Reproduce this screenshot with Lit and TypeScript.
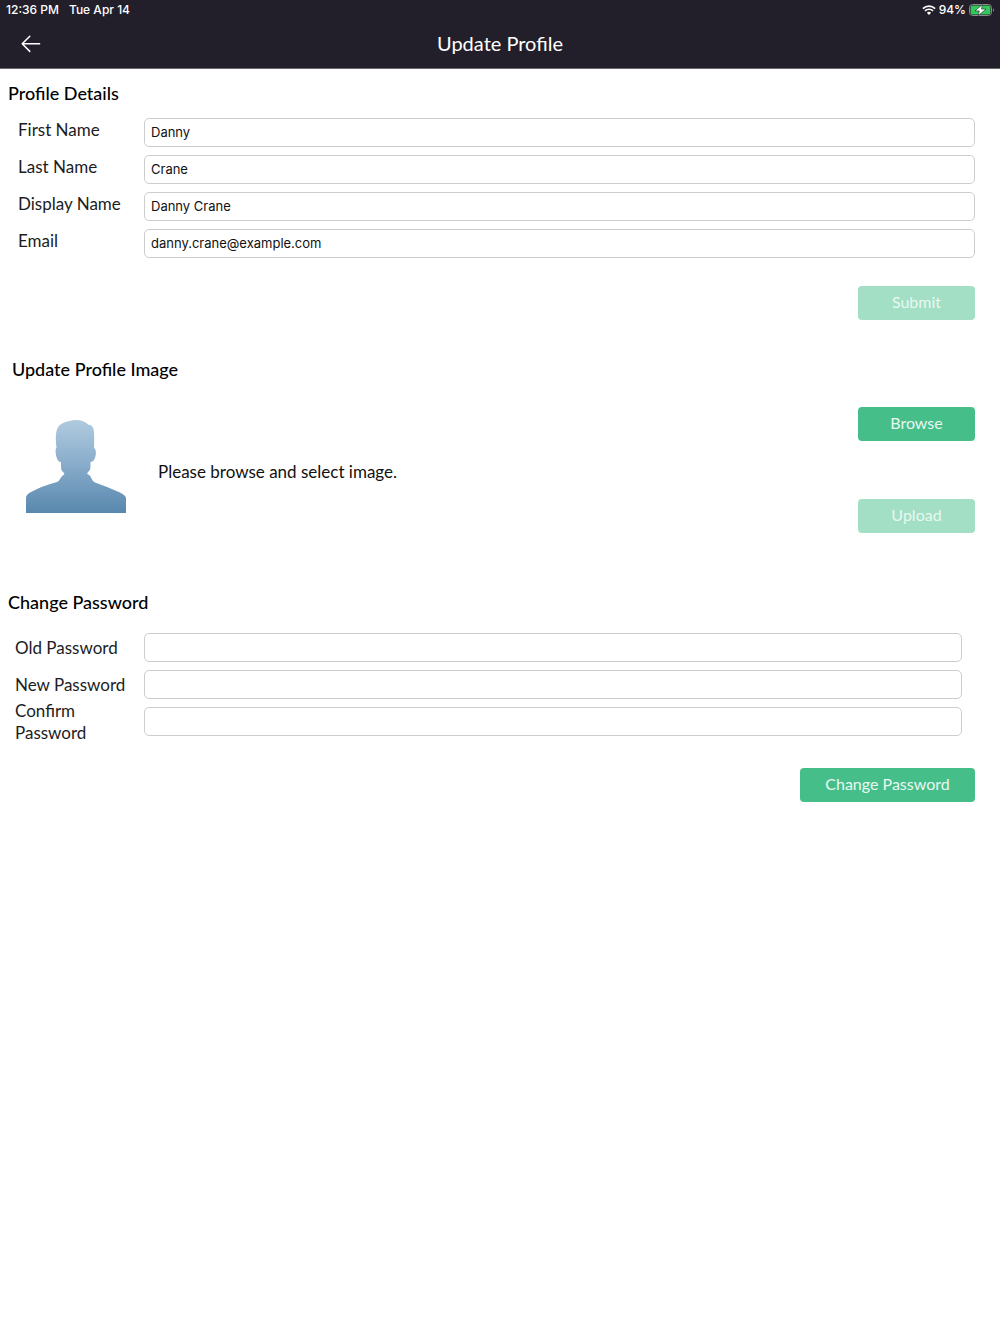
import { LitElement, html, css, svg } from "lit";
import { customElement, property } from "lit/decorators.js";

interface Field {
  id: string;
  label: string;
  type: string;
  value: string;
}

const profileFields: Field[] = [
  { id: "first-name", label: "First Name", type: "text", value: "Danny" },
  { id: "last-name", label: "Last Name", type: "text", value: "Crane" },
  { id: "display-name", label: "Display Name", type: "text", value: "Danny Crane" },
  { id: "email", label: "Email", type: "email", value: "danny.crane@example.com" },
];

const passwordFields: Field[] = [
  { id: "old-password", label: "Old Password", type: "password", value: "" },
  { id: "new-password", label: "New Password", type: "password", value: "" },
  { id: "confirm-password", label: "Confirm Password", type: "password", value: "" },
];

const wifiIcon = svg`
  <svg class="wifi" viewBox="0 0 14 10" aria-hidden="true">
    <path d="M0.9 3.6a8.7 8.7 0 0 1 12.2 0" fill="none" stroke="#fff" stroke-width="1.8"/>
    <path d="M3 5.9a5.7 5.7 0 0 1 8 0" fill="none" stroke="#fff" stroke-width="1.7"/>
    <path d="M7 9.9L4.9 7.8a3 3 0 0 1 4.2 0z" fill="#fff"/>
  </svg>`;

const batteryIcon = svg`
  <svg class="battery" viewBox="0 0 25 12" aria-hidden="true">
    <rect x="0.5" y="0.5" width="22" height="11" rx="3.2" fill="none" stroke="#8b8990"/>
    <path d="M24 4.2q1 .6 1 1.8t-1 1.8z" fill="#8b8990"/>
    <rect x="1.600" y="1.600" width="19.800" height="8.800" rx="2" fill="#35c759"/>
    <path d="M13.400 0.600L6 6.900H10.300L9.300 11.600L17 5.100H12.500z" fill="#fff" stroke="#221f2a" stroke-width="0.6"/>
  </svg>`;

const backIcon = svg`
  <svg class="arrow" viewBox="0 0 20 18" aria-hidden="true">
    <path d="M18.600 8.800H1.300M8.800 1.200L1.200 8.800L8.800 16.400" fill="none" stroke="#fff" stroke-width="1.5" stroke-linecap="round" stroke-linejoin="round"/>
  </svg>`;

const avatar = svg`
  <svg class="avatar" viewBox="0 0 100 93" role="img" aria-label="Profile image">
    <defs>
      <linearGradient id="tone" x1="0" y1="0" x2="0" y2="1">
        <stop offset="0" stop-color="#b0cbe0"/>
        <stop offset="0.5" stop-color="#86aac9"/>
        <stop offset="1" stop-color="#5988ae"/>
      </linearGradient>
    </defs>
    <path fill="url(#tone)" d="M0 93V78Q0 74.500 5 72Q16 66 31 62Q33 61.500 34 59Q35.500 56 38.500 54Q38 52.500 36.500 51.500Q35 50 35 47V42Q31.500 42 30.200 36Q28.800 29 30.500 27.500Q29.600 22 29.900 15Q30.300 6.500 36 3.500Q43 0 50.500 0Q58 0 62.500 4.700Q66.500 4.500 67.600 9.500Q68.500 14 68 27.500Q70.500 30 69.700 35Q68.500 42 64.500 42V47Q64.500 50 62.500 51.500L61 53.500Q64 55 65.500 58.500Q67 62 69 62.500Q82 67 94 72.500Q100 75.500 100 78V93Z"/>
  </svg>`;

@customElement("app-status-bar")
export class AppStatusBar extends LitElement {
  static styles = css`
    :host {
      display: flex;
      align-items: center;
      justify-content: space-between;
      height: 20px;
      padding: 0 6px;
      color: #fff;
      font: 500 12px/20px Inter, "Liberation Sans", sans-serif;
    }
    .group {
      display: flex;
      align-items: center;
      gap: 10px;
    }
    .tight {
      gap: 3px;
    }
    .wifi {
      width: 14px;
      height: 10px;
    }
    .battery {
      width: 25px;
      height: 12px;
    }
  `;

  render() {
    return html`
      <div class="group"><span>12:36 PM</span><span>Tue Apr 14</span></div>
      <div class="group tight">${wifiIcon}<span>94%</span>${batteryIcon}</div>
    `;
  }
}

@customElement("app-field-list")
export class AppFieldList extends LitElement {
  @property({ attribute: false }) fields: Field[] = [];

  static styles = css`
    :host {
      display: grid;
      gap: 8px;
      font: 17px/22px Lato, "Open Sans", sans-serif;
      color: #1c1c1e;
    }
    .row {
      display: grid;
      grid-template-columns: var(--label-width) 1fr;
      grid-template-rows: 29px;
      align-items: center;
    }
    .label {
      padding-bottom: var(--label-lift, 0);
      padding-right: 16px;
    }
    .input {
      box-sizing: border-box;
      width: 100%;
      min-width: 0;
      height: 29px;
      margin: 0;
      padding: 0 6px 2px;
      border: 1px solid #cdcdcd;
      border-radius: 5px;
      background: #fff;
      color: #111;
      font: 13px/18px Inter, "Liberation Sans", sans-serif;
    }
  `;

  render() {
    return this.fields.map(
      (f) => html`
        <div class="row">
          <label class="label" for=${f.id}>${f.label}</label>
          <input class="input" id=${f.id} type=${f.type} .value=${f.value} />
        </div>
      `,
    );
  }
}

@customElement("app-root")
export class AppRoot extends LitElement {
  static styles = css`
    :host {
      display: block;
      min-height: 100vh;
      background: #fff;
      color: #111;
      font: 17px/22px Lato, "Open Sans", sans-serif;
    }
    .header {
      background: #221f2a;
      border-bottom: 1px solid #69666e;
    }
    .nav {
      display: grid;
      grid-template-columns: 60px 1fr 60px;
      align-items: center;
      height: 48px;
    }
    .back {
      display: flex;
      align-items: center;
      height: 48px;
      padding: 0 21px;
      border: 0;
      background: none;
      cursor: pointer;
    }
    .arrow {
      flex: none;
      width: 20px;
      height: 18px;
    }
    .title {
      margin: 0;
      padding-bottom: 2px;
      color: #fff;
      text-align: center;
      font-size: 20px;
      font-weight: 400;
      line-height: 24px;
    }
    .profile {
      padding: 13px 25px 0 8px;
    }
    .image {
      padding: 38px 25px 0 12px;
    }
    .password {
      padding: 58px 25px 40px 8px;
    }
    .heading {
      margin: 0;
      color: #000;
      font-size: 18px;
      font-weight: 500;
      line-height: 22px;
    }
    .profile-fields {
      --label-width: 126px;
      --label-lift: 6px;
      padding: 14px 0 0 10px;
    }
    .password-fields {
      --label-width: 129px;
      padding: 20px 13px 0 7px;
    }
    .actions {
      display: flex;
      justify-content: flex-end;
      padding-top: 28px;
    }
    .password .actions {
      padding-top: 32px;
    }
    .button {
      min-width: 117px;
      height: 34px;
      padding: 0 25px 2px;
      border: 0;
      border-radius: 4px;
      background: #46be8a;
      color: #e9f8f1;
      font: 16px/22px Lato, "Open Sans", sans-serif;
      cursor: pointer;
    }
    .button:disabled {
      background: #a2dfc4;
      color: #e9f8f1;
      cursor: default;
    }
    .wide {
      min-width: 175px;
    }
    .picker {
      display: flex;
      align-items: center;
      padding: 27px 0 0 14px;
    }
    .avatar {
      flex: none;
      width: 100px;
      height: 93px;
      padding-bottom: 8px;
    }
    .hint {
      flex: 1;
      margin: 0;
      padding: 4px 16px 0 32px;
    }
    .stack {
      display: flex;
      flex-direction: column;
      gap: 58px;
    }
  `;

  render() {
    return html`
      <header class="header">
        <app-status-bar></app-status-bar>
        <div class="nav">
          <button class="back" type="button" aria-label="Back">${backIcon}</button>
          <h1 class="title">Update Profile</h1>
        </div>
      </header>
      <main>
        <section class="profile">
          <h2 class="heading">Profile Details</h2>
          <app-field-list class="profile-fields" .fields=${profileFields}></app-field-list>
          <div class="actions"><button class="button" type="button" disabled>Submit</button></div>
        </section>
        <section class="image">
          <h2 class="heading">Update Profile Image</h2>
          <div class="picker">
            ${avatar}
            <p class="hint">Please browse and select image.</p>
            <div class="stack">
              <button class="button" type="button">Browse</button>
              <button class="button" type="button" disabled>Upload</button>
            </div>
          </div>
        </section>
        <section class="password">
          <h2 class="heading">Change Password</h2>
          <app-field-list class="password-fields" .fields=${passwordFields}></app-field-list>
          <div class="actions"><button class="button wide" type="button">Change Password</button></div>
        </section>
      </main>
    `;
  }
}
